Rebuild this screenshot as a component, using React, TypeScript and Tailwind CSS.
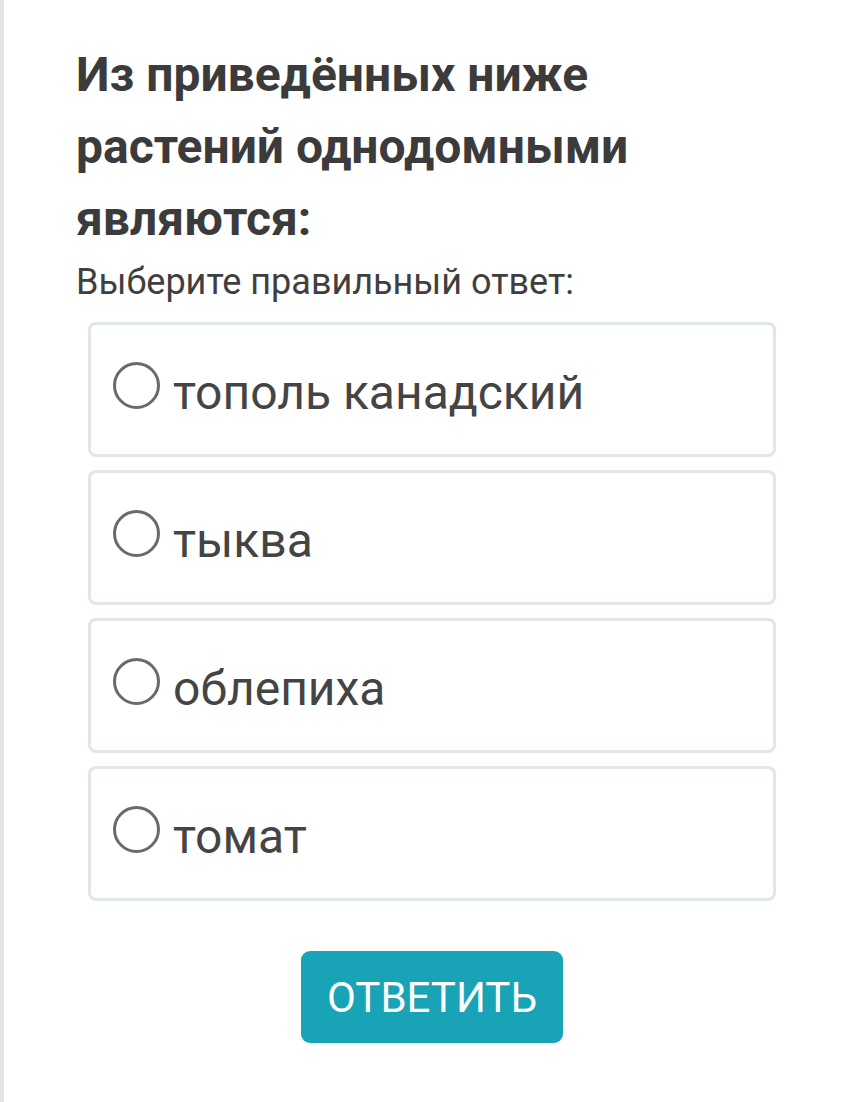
import React from "react";

const options = ["тополь канадский", "тыква", "облепиха", "томат"];

export default function App() {
  return (
    <div className="flex min-h-[1102px] w-full bg-white" style={{ fontFamily: "Roboto, 'Noto Sans', Arial, sans-serif" }}>
      <div className="w-[4px] shrink-0 bg-[#e3e3e3]" />
      <div className="flex-1 pl-[72px] pt-[39px]">
        <h1 className="text-[48px] font-bold leading-[72px] text-[#3b3b3b] w-[600px]">
          Из приведённых ниже растений однодомными являются:
        </h1>
        <p className="mt-[3px] text-[36px] leading-[48px] text-[#3f3f3f]">Выберите правильный ответ:</p>
        <div className="ml-[12px] mt-[16px] flex w-[688px] flex-col gap-[13px]">
          {options.map((o) => (
            <div
              key={o}
              className="flex h-[135px] items-start gap-[13px] rounded-[8px] border-[3px] border-[#e1e6e6] pl-[22px] pt-[37px]"
            >
              <span className="block h-[47px] w-[47px] shrink-0 rounded-full border-[3px] border-[#6a6a6a]" />
              <span className="mt-[3px] text-[48px] leading-[56px] text-[#444444]">{o}</span>
            </div>
          ))}
        </div>
        <div className="ml-[12px] mt-[50px] flex w-[688px] justify-center">
          <button className="flex h-[92px] w-[262px] items-center justify-center rounded-[9px] bg-[#19a3b6] text-[42px] text-white">
            ОТВЕТИТЬ
          </button>
        </div>
      </div>
    </div>
  );
}
